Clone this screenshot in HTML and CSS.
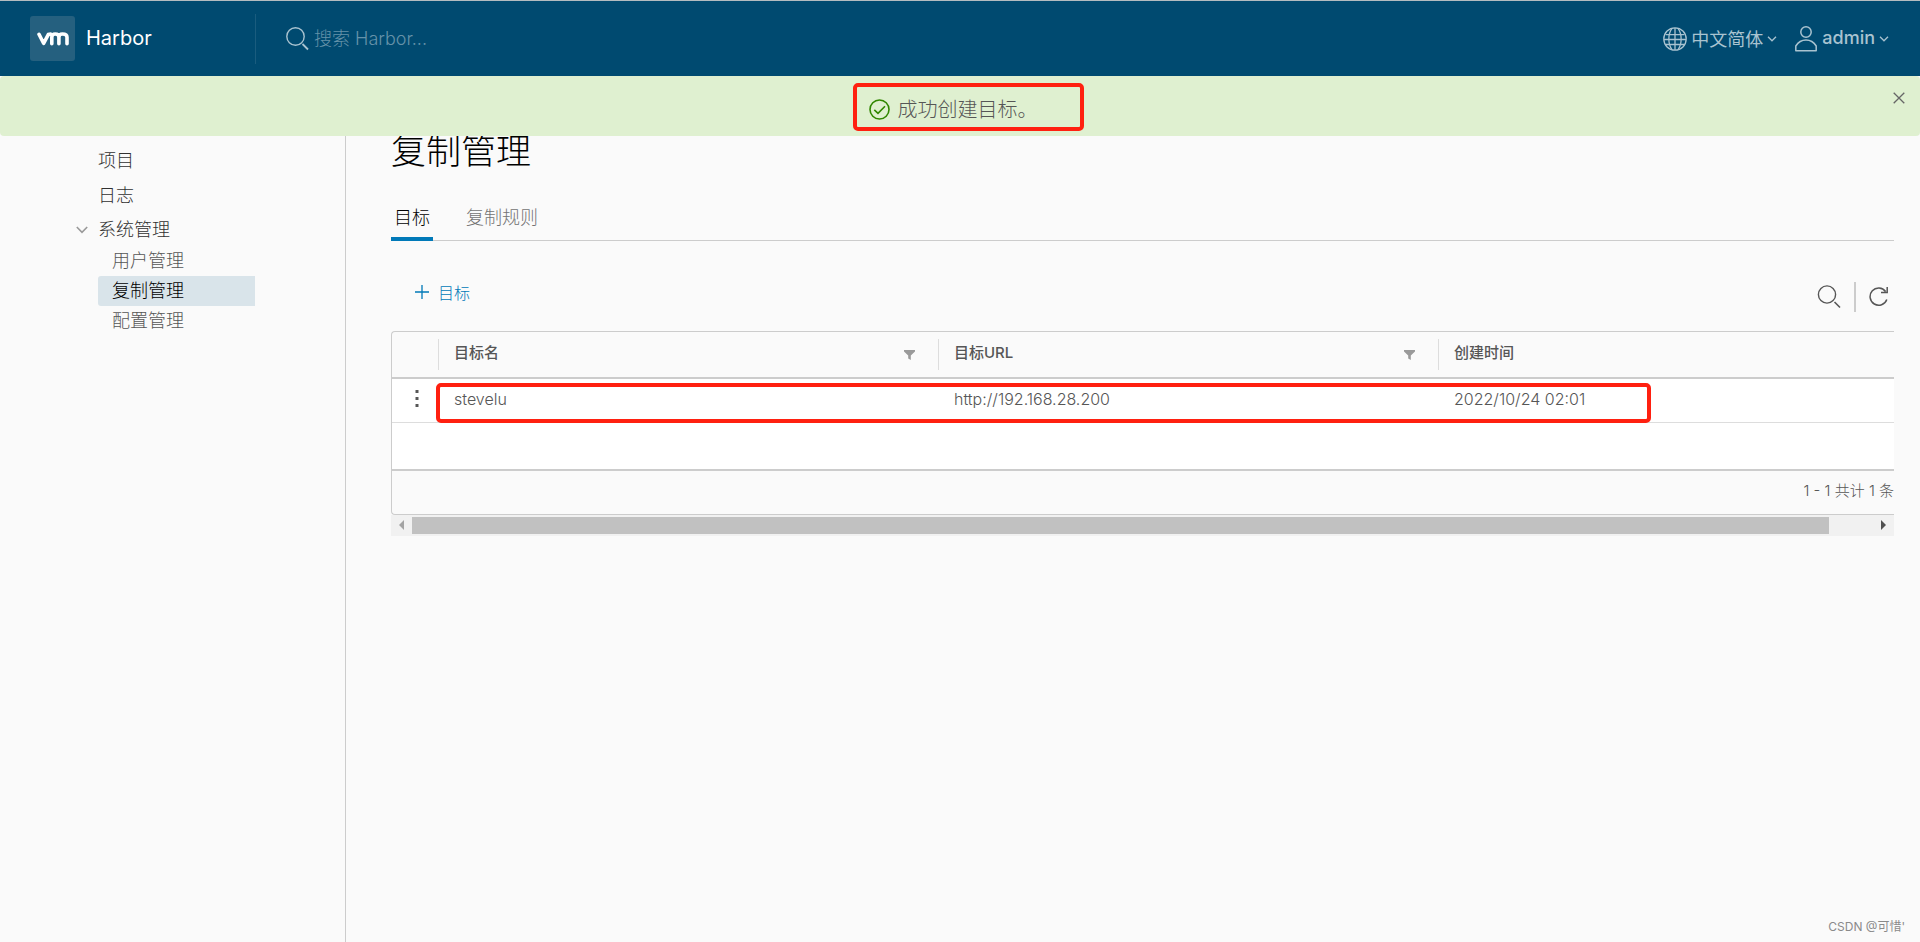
FILE: index.html
```html
<!DOCTYPE html>
<html lang="zh-CN">
<head>
<meta charset="utf-8">
<title>Harbor</title>
<link rel="stylesheet" href="styles.css">
</head>
<body>
<header class="header">
  <a class="brand" href="#">
    <span class="logo"><svg width="32" height="14" viewBox="0 0 32 14" fill="none" stroke="#fff" stroke-width="3.6" stroke-linecap="round" stroke-linejoin="round"><path d="M2 2.3 6.6 11.3 11.4 2.3 Q12 2 13.6 2M14.8 11.8V5.2Q14.8 2 18.2 2Q21.9 2 21.9 5.2V11.8M21.9 5.2Q21.9 2 25.4 2Q30 2 30 5.2V11.8"/></svg></span>
    <span class="brand-name">Harbor</span>
  </a>
  <label class="search">
    <svg width="24" height="24" viewBox="0 0 24 24" fill="none" stroke="currentColor" stroke-width="1.4"><circle cx="9.5" cy="9.5" r="8.7"/><path d="M16.500 17l5.500 5.500" stroke-width="1.8"/></svg>
    <input class="search-input" type="text" placeholder="搜索 Harbor..." aria-label="搜索 Harbor...">
  </label>
  <button class="menu menu-lang" type="button">
    <svg width="24" height="24" viewBox="0 0 24 24" fill="none" stroke="currentColor" stroke-width="1.3"><circle cx="12" cy="12" r="11.2"/><path d="M12 1v22M2.5 7.6h19M1 12.5h22M2.5 17.5h19M9 1.4C4.800 7 4.800 17 9 22.600M15 1.400C19.200 7 19.200 17 15 22.600"/></svg>
    <span class="menu-text">中文简体</span>
    <svg class="caret" width="10" height="6" viewBox="0 0 10 6" fill="none" stroke="currentColor" stroke-width="1.3"><path d="M1 .8 5 4.800 9 .8"/></svg>
  </button>
  <button class="menu" type="button">
    <svg width="23" height="26" viewBox="0 0 23 26" fill="none" stroke="currentColor" stroke-width="1.5"><circle cx="11" cy="6" r="5.200"/><path d="M.8 24.700V20Q4.500 14 11 14T21.200 20V24.700Z" stroke-linejoin="round"/></svg>
    <span class="menu-text menu-user">admin</span>
    <svg class="caret" width="10" height="6" viewBox="0 0 10 6" fill="none" stroke="currentColor" stroke-width="1.3"><path d="M1 .8 5 4.800 9 .8"/></svg>
  </button>
</header>

<div class="alert" role="alert">
  <div class="alert-message">
    <svg width="21" height="21" viewBox="0 0 21 21" fill="none" stroke="#318700" stroke-width="1.600"><circle cx="10.500" cy="10.500" r="9.500"/><path d="M5.300 10.800 9 14.300 16 7.200"/></svg>
    <span>成功创建目标。</span>
    <span class="mark mark-alert"></span>
  </div>
  <button class="close" type="button" aria-label="关闭"><svg width="12" height="12" viewBox="0 0 12 12" stroke="#666" stroke-width="1.300"><path d="M.7.7 11.300 11.300M11.300.7.7 11.300"/></svg></button>
</div>

<div class="layout">
  <nav class="sidebar">
    <a class="nav-link" href="#">项目</a>
    <a class="nav-link" href="#">日志</a>
    <button class="nav-link nav-group" type="button">
      <svg width="12" height="8" viewBox="0 0 12 8" fill="none" stroke="#999" stroke-width="1.600"><path d="M.8 1 6 6.300 11.200 1"/></svg>系统管理
    </button>
    <a class="sub-link" href="#">用户管理</a>
    <a class="sub-link active" href="#">复制管理</a>
    <a class="sub-link" href="#">配置管理</a>
  </nav>

  <main class="main">
    <h1 class="title">复制管理</h1>
    <div class="tabs" role="tablist">
      <button class="tab selected" type="button" role="tab" aria-selected="true">目标</button>
      <button class="tab" type="button" role="tab" aria-selected="false">复制规则</button>
    </div>
    <div class="toolbar">
      <button class="add" type="button"><svg width="14" height="14" viewBox="0 0 14 14" stroke="currentColor" stroke-width="1.300"><path d="M7 0V14M0 7H14"/></svg>目标</button>
      <div class="tools">
        <button class="tool" type="button" aria-label="搜索"><svg width="24" height="24" viewBox="0 0 24 24" fill="none" stroke="#565656" stroke-width="1.400"><circle cx="10" cy="9.500" r="8.600"/><path d="M17.500 17l5.500 5.500" stroke-width="1.600"/></svg></button>
        <span class="divider"></span>
        <button class="tool" type="button" aria-label="刷新"><svg width="20" height="22" viewBox="0 0 20 22" fill="none" stroke="#565656" stroke-width="1.500"><path d="M17.800 13.500A8.600 8.600 0 1 1 16.600 5.500M18.200 1V6.500H12"/></svg></button>
      </div>
    </div>

    <div class="grid-wrap">
      <div class="grid">
        <table class="table">
          <colgroup><col class="col-action"><col class="col-wide"><col class="col-wide"><col></colgroup>
          <thead>
            <tr>
              <th aria-label="操作"></th>
              <th><div class="th"><span class="th-text">目标名</span><svg width="11" height="10" viewBox="0 0 11 10" fill="#9a9a9a"><path d="M0 0H11V1.500L6.800 5.500V10L4.200 8.500V5.500L0 1.500Z"/></svg></div></th>
              <th><div class="th"><span class="th-text">目标URL</span><svg width="11" height="10" viewBox="0 0 11 10" fill="#9a9a9a"><path d="M0 0H11V1.500L6.800 5.500V10L4.200 8.500V5.500L0 1.500Z"/></svg></div></th>
              <th><div class="th"><span class="th-text">创建时间</span></div></th>
            </tr>
          </thead>
          <tbody>
            <tr>
              <td class="cell-action"><button class="dots" type="button" aria-label="操作"><svg width="4" height="17" viewBox="0 0 4 17" fill="#565656"><path d="M.5 0h3v3h-3zM.5 7h3v3h-3zM.5 14h3v3h-3z"/></svg></button></td>
              <td>stevelu</td>
              <td>http://192.168.28.200</td>
              <td>2022/10/24 02:01</td>
            </tr>
          </tbody>
        </table>
        <div class="blank"></div>
        <div class="grid-footer">1 - 1 共计 1 条</div>
      </div>
      <div class="scrollbar" aria-hidden="true">
        <svg width="21" height="20" viewBox="0 0 21 20" fill="#a3a3a3"><path d="M13 5V15L8 10Z"/></svg>
        <div class="track"><div class="thumb"></div></div>
        <svg width="21" height="20" viewBox="0 0 21 20" fill="#505050"><path d="M8 5V15L13 10Z"/></svg>
      </div>
      <span class="mark mark-row"></span>
    </div>
  </main>
</div>
<span class="credit">CSDN @可惜'</span>
</body>
</html>
```
FILE: styles.css
```css
* { box-sizing: border-box; }
body {
  margin: 0;
  min-height: 100vh;
  display: flex;
  flex-direction: column;
  background: #fafafa;
  color: #565656;
  font-family: Inter, "Noto Sans CJK SC", sans-serif;
  font-size: 18px;
  font-weight: 300;
}
button { font: inherit; color: inherit; background: none; border: 0; padding: 0; cursor: pointer; }
a { color: inherit; text-decoration: none; }
svg { flex: none; display: block; }

.header {
  height: 76px;
  display: flex;
  align-items: center;
  padding: 0 31px 0 30px;
  background: #004a70;
  border-top: 1px solid #b4bcc0;
  color: #a9c3d0;
}
.brand { display: flex; align-items: center; gap: 11px; width: 225px; color: #fff; }
.logo { width: 45px; height: 45px; display: flex; align-items: center; justify-content: center; background: #25607f; border-radius: 3px; }
.brand-name { padding-bottom: 2px; font-size: 20px; font-weight: 400; }
.search { flex: 1; height: 50px; display: flex; align-items: center; gap: 4px; padding-left: 30px; border-left: 1px solid #1a5c7e; }
.search-input { width: 300px; padding: 0; border: 0; outline: 0; background: none; color: #fff; font: inherit; }
.search-input::placeholder { color: #6592a9; opacity: 1; }
.menu { display: flex; align-items: center; gap: 4px; font-weight: 400; }
.menu-lang { margin-right: 18px; }
.menu-text { padding-bottom: 2px; }
.menu-user { font-weight: 500; }

.alert {
  height: 60px;
  display: flex;
  align-items: center;
  justify-content: center;
  position: relative;
  background: #dff0d0;
  border-radius: 4px;
}
.alert-message { position: relative; display: flex; align-items: center; gap: 8px; margin-top: 7px; padding-right: 14px; font-size: 20px; line-height: 30px; }
.close { position: absolute; top: 16px; right: 15px; }

.layout { flex: 1; display: flex; }
.sidebar { width: 346px; flex: none; padding: 7px 90px 0 98px; border-right: 1px solid #ccc; }
.nav-link { display: block; line-height: 35px; color: #313131; }
.nav-group { display: flex; align-items: center; gap: 10px; height: 33px; margin-left: -22px; }
.sub-link { display: block; padding-left: 14px; line-height: 30px; border-radius: 3px 0 0 3px; }
.active { background: #d9e4ea; color: #000; }

.main { flex: 1; min-width: 0; padding: 0 26px 0 45px; }
.title { margin: 0; height: 60px; color: #000; font-size: 35px; font-weight: 300; line-height: 30px; }
.tabs { height: 45px; display: flex; gap: 29px; border-bottom: 1px solid #ccc; }
.tab { height: 45px; padding: 0 4px 2px; color: #737373; line-height: 43px; }
.selected { border-bottom: 4px solid #0079b8; padding: 0 3px; color: #000; }
.toolbar { height: 90px; display: flex; align-items: center; justify-content: space-between; padding: 12px 5px 0 24px; }
.add { display: flex; align-items: center; gap: 9px; color: #0079b8; font-size: 16px; }
.tools { display: flex; align-items: center; gap: 13px; padding-top: 10px; }
.divider { width: 2px; height: 30px; background: #ccc; }

.grid-wrap { position: relative; }
.grid { overflow: hidden; border: 1px solid #ccc; border-right: 0; border-radius: 4px 0 0 4px; }
.table { width: 100%; table-layout: fixed; border-collapse: collapse; font-size: 16px; }
.col-action { width: 46px; }
.col-wide { width: 500px; }
.table th { height: 46px; padding: 0; border-bottom: 2px solid #ccc; text-align: left; font-size: 15px; font-weight: 500; }
.th { display: flex; align-items: center; justify-content: space-between; height: 31px; padding: 0 23px 0 15px; border-left: 1px solid #ddd; }
.th-text { padding-bottom: 7px; }
.table td { height: 44px; padding: 0 0 3px 16px; background: #fff; border-bottom: 1px solid #ddd; }
.table .cell-action { padding: 1px 0 0 23px; }
.blank { height: 48px; background: #fff; border-bottom: 2px solid #ccc; }
.grid-footer { height: 43px; line-height: 40px; text-align: right; font-size: 15px; }
.scrollbar { height: 21px; display: flex; align-items: center; background: #f1f1f1; }
.track { flex: 1; }
.thumb { width: 97%; height: 17px; background: #c1c1c1; }

.mark { position: absolute; border: 4px solid #ff2010; border-radius: 5px; pointer-events: none; }
.mark-alert { top: -12px; left: -16px; width: 231px; height: 48px; }
.mark-row { top: 52px; left: 45px; width: 1215px; height: 40px; }
.credit { position: absolute; right: 15px; bottom: 8px; color: #8a8a8a; font-size: 12px; font-weight: 400; }
```
